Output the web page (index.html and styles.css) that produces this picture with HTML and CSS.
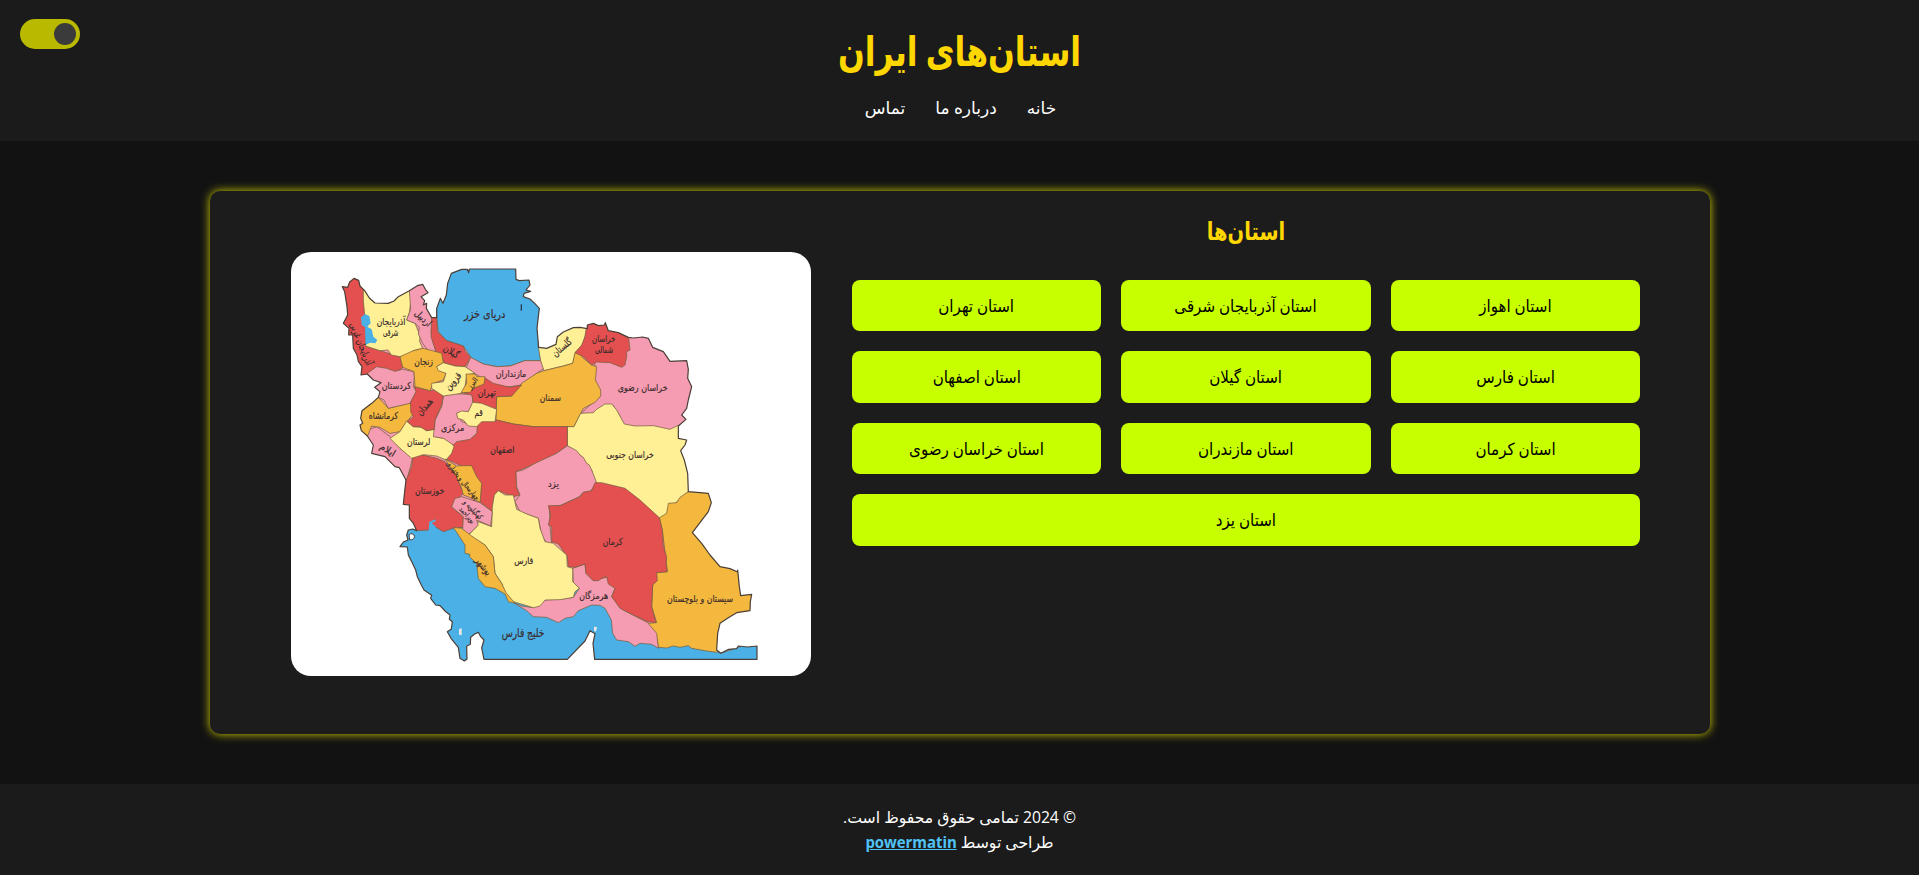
FILE: index.html
```html
<!DOCTYPE html>
<html lang="fa" dir="rtl">
<head>
<meta charset="UTF-8">
<title>استان‌های ایران</title>
<link rel="stylesheet" href="styles.css">
</head>
<body>
<header class="header">
  <button class="toggle" aria-label="تغییر پوسته"><span class="toggle-knob"></span></button>
  <h1 class="title">استان‌های ایران</h1>
  <nav class="nav">
    <a href="#">خانه</a>
    <a href="#">درباره ما</a>
    <a href="#">تماس</a>
  </nav>
</header>
<main class="card">
  <section class="provinces">
    <h2 class="subtitle">استان‌ها</h2>
    <div class="grid">
      <a class="item" href="#"><span>استان اهواز</span></a>
      <a class="item" href="#"><span>استان آذربایجان شرقی</span></a>
      <a class="item" href="#"><span>استان تهران</span></a>
      <a class="item" href="#"><span>استان فارس</span></a>
      <a class="item" href="#"><span>استان گیلان</span></a>
      <a class="item" href="#"><span>استان اصفهان</span></a>
      <a class="item" href="#"><span>استان کرمان</span></a>
      <a class="item" href="#"><span>استان مازندران</span></a>
      <a class="item" href="#"><span>استان خراسان رضوی</span></a>
      <a class="item wide" href="#"><span>استان یزد</span></a>
    </div>
  </section>
  <figure class="map">
    <svg class="map-svg" viewBox="33 36 1560 1272">
      <defs>
        <path id="border" d="M187 140L203 142 209 126 222 115 236 121 240 138 254 152 268 174 285 189 325 190 342 183 355 170 388 152 412 137 428 133 436 148 444 158 423 170 434 182 430 195 440 190 439 205 455 233 470 233 470 205 481 175 489 190 499 165 503 130 514 100 545 88 562 88 566 98 568 87 707 87 708 118 718 122 747 120 750 135 738 150 752 154 732 160 730 170 750 177 764 190 778 205 774 238 771 265 776 322 800 325 828 313 832 290 850 276 880 263 900 262 922 266 922 255 940 250 955 257 973 255 976 248 985 272 1015 278 1045 292 1060 294 1088 291 1105 295 1118 322 1150 335 1170 364 1220 362 1225 388 1223 415 1235 440 1225 480 1220 505 1205 525 1218 538 1195 558 1195 595 1220 600 1215 615 1202 632 1213 660 1223 700 1225 755 1285 760 1294 788 1285 815 1237 878 1265 910 1290 945 1320 980 1350 986 1373 996 1373 990 1378 1040 1382 1067 1415 1063 1411 1085 1410 1112 1370 1118 1345 1133 1320 1150 1313 1180 1310 1230 1322 1240 1346 1228 1370 1226 1375 1218 1403 1221 1431 1218 1431 1258 944 1258 939 1210 945 1181 930 1172 915 1203 862 1258 612 1258 605 1224 612 1200 602 1190 595 1177 584 1182 572 1192 571 1213 560 1219 561 1257 553 1263 540 1255 535 1222 513 1195 502 1175 514 1167 517 1145 508 1138 510 1125 495 1113 480 1097 467 1095 452 1075 455 1066 432 1050 424 1035 412 1010 407 990 396 967 385 945 382 921 360 920 370 906 384 900 380 885 385 870 398 867 410 872 400 850 388 835 388 795 370 793 375 745 378 720 358 683 345 680 315 650 275 640 280 615 262 588 244 572 240 555 248 550 242 535 246 512 275 490 295 472 300 455 284 442 303 428 280 420 262 402 243 405 246 380 235 364 231 345 220 325 218 285 206 285 207 265 190 250 203 225 201 200 194 155Z"/>
        <clipPath id="inside"><use href="#border"/></clipPath>
      </defs>
      <use href="#border" class="base"/>
      <g class="land" clip-path="url(#inside)">
        <path class="b" d="M370 850L350 920 500 1270 1440 1270 1440 1200 1322 1240 1308 1233 1100 1190 920 1050 600 900 550 850Z"/>
        <path class="b" d="M470 205L470 80 800 80 776 300 782 362 735 362 690 378 650 380 610 372 575 355 550 318 500 302 475 275 470 235Z"/>
        <path class="r" d="M180 100L230 100 275 170 250 185 256 220 257 318 300 332 360 350 370 382 345 398 290 384 262 402 230 410 180 250Z"/>
        <path class="y" d="M250 183L250 150 388 140 393 180 388 218 380 240 405 250 420 287 419 305 428 325 400 332 385 345 360 350 334 345 324 330 300 332 257 318 256 245Z"/>
        <path class="p" d="M388 152L388 120 450 120 462 235 453 275 459 305 468 335 447 335 428 310 415 282 418 262 405 250 380 240 392 208Z"/>
        <path class="r" d="M455 225L470 225 472 275 500 302 550 318 556 335 572 352 555 380 525 378 490 368 485 345 468 335 453 290Z"/>
        <path class="p" d="M572 352L610 372 650 380 690 378 735 362 782 362 792 385 770 400 725 435 690 440 640 440 600 410 558 385Z"/>
        <path class="y" d="M774 315L830 250 925 255 915 290 908 315 887 336 878 370 850 378 792 392 782 362Z"/>
        <path class="p" d="M1040 280L1250 280 1250 560 1190 560 1170 572 1120 562 1065 562 1033 558 1018 525 1000 497 965 500 935 522 900 523 930 495 960 470 940 430 945 365 990 360Z"/>
        <path class="o" d="M792 392L850 378 878 370 885 338 900 340 910 355 935 375 950 380 946 420 962 450 962 468 945 487 910 505 902 520 882 560 760 560 700 552 648 540 650 470 695 468 725 430 770 400Z"/>
        <path class="r" d="M922 240L1000 240 1045 285 1050 330 1040 335 1040 350 1035 375 1025 382 990 368 950 366 935 375 910 350 885 338 905 315 915 290Z"/>
        <path class="y" d="M902 520L940 518 950 508 975 492 995 492 1010 510 1033 552 1065 558 1120 557 1170 568 1195 556 1240 556 1240 755 1225 755 1200 778 1185 790 1168 794 1160 825 1138 836 1105 805 1045 755 945 730 935 690 900 645 862 617 862 560 882 560Z"/>
        <path class="o" d="M1225 755L1310 740 1310 930 1430 990 1430 1120 1310 1237 1280 1233 1235 1225 1225 1217 1200 1222 1180 1218 1160 1224 1135 1222 1130 1190 1103 1150 1130 1148 1115 1100 1118 1035 1130 998 1162 995 1155 935 1147 870 1138 833 1160 820 1165 790 1190 788 1200 772Z"/>
        <path class="p" d="M700 1088L725 1098 760 1103 785 1080 840 1078 880 1072 898 1045 880 1030 878 985 915 972 918 1000 940 1022 985 1010 1005 1045 995 1070 1030 1110 1103 1148 1130 1180 1135 1225 1115 1213 1080 1210 1065 1219 1045 1205 1010 1200 998 1180 994 1140 975 1105 960 1096 935 1095 895 1112 880 1130 855 1135 835 1148 800 1132 760 1130 740 1112Z"/>
        <path class="r" d="M520 605L585 588 592 550 610 543 650 540 700 552 760 560 862 560 862 617 830 640 780 665 708 695 710 745 720 765 700 770 655 752 642 770 637 815 600 785 605 730 580 700 550 680 498 657Z"/>
        <path class="p" d="M708 695L730 690 765 670 830 640 862 617 890 632 900 645 910 652 920 670 928 675 935 690 950 728 930 755 910 757 895 772 840 797 808 800 810 860 815 912 800 910 785 885 775 835 720 815 705 785 720 765 710 740Z"/>
        <path class="r" d="M945 728L965 728 1035 745 1080 780 1138 833 1147 870 1150 920 1160 950 1158 970 1162 995 1130 998 1132 1022 1118 1035 1115 1100 1128 1148 1103 1145 1060 1125 1020 1105 995 1070 1005 1045 985 1032 980 1010 965 1015 955 1022 940 1022 918 1000 915 972 885 982 865 980 862 950 835 912 815 905 815 860 805 855 812 825 805 797 840 797 900 770 910 757 935 752Z"/>
        <path class="y" d="M643 765L655 752 675 765 700 765 710 808 740 822 775 835 780 865 795 905 820 910 860 945 862 980 878 985 878 1025 898 1045 885 1055 880 1072 840 1079 795 1080 780 1098 760 1103 700 1085 675 1060 665 1030 645 1000 640 950 615 915 565 885 590 860 595 845 635 860 637 800Z"/>
        <path class="p" d="M250 575L290 560 330 590 360 625 398 652 390 685 378 730 250 700Z"/>
        <path class="r" d="M400 645L420 643 470 655 495 665 530 710 550 760 535 775 515 800 550 830 550 862 520 865 490 875 465 860 445 870 410 872 390 865 360 800 375 730 395 680Z"/>
        <path class="o" d="M262 590L230 575 230 510 295 472 325 505 390 488 402 520 380 545 360 575 330 580 300 562 275 558Z"/>
        <path class="y" d="M380 543L400 560 425 562 440 572 463 568 465 590 490 595 505 597 522 620 515 640 498 660 470 648 430 644 395 655 360 625 330 595 360 575Z"/>
        <path class="p" d="M262 400L290 380 320 385 345 394 368 388 402 395 403 412 400 440 410 455 390 490 325 505 312 480 295 472 270 460 260 415Z"/>
        <path class="p" d="M490 468L520 460 545 462 578 462 578 490 565 515 530 520 545 545 592 560 590 580 570 598 530 605 520 615 490 595 460 590 465 540 485 500Z"/>
        <path class="r" d="M403 440L450 452 472 450 490 468 485 495 465 540 463 568 440 572 420 560 400 560 382 545 400 530 392 515 392 495 390 490 408 455Z"/>
        <path class="o" d="M360 350L400 332 428 325 450 330 485 340 490 368 470 380 498 400 490 420 460 430 450 452 405 440 402 395 368 382Z"/>
        <path class="y" d="M470 380L490 368 525 378 555 380 585 400 560 405 555 440 545 460 490 468 455 445 455 430 490 425 498 400 475 392Z"/>
        <path class="r" d="M612 412L640 430 690 442 725 435 695 468 650 470 648 508 580 487 575 465 550 460 580 445Z"/>
        <path class="o" d="M558 402L585 402 590 410 615 410 612 432 580 445 570 457 543 458 560 430Z"/>
        <path class="y" d="M578 487L605 490 650 508 645 545 605 545 590 560 565 558 550 540 533 535 530 520 545 513 565 515Z"/>
        <path class="o" d="M495 657L530 678 550 677 575 677 590 710 605 730 600 787 570 772 550 765 545 745 530 710Z"/>
        <path class="p" d="M515 800L525 775 545 770 600 788 637 815 632 858 590 840 595 855 565 885 548 870 550 830Z"/>
        <path class="o" d="M520 862L545 865 575 888 615 915 640 950 645 1000 665 1030 678 1058 705 1090 685 1085 675 1062 645 1045 615 1040 595 1015 590 970 568 950 570 943 555 940 555 915Z"/>
      </g>
      <use href="#border" class="outline"/>
      <path class="lake" d="M243 232L255 222 268 228 272 250 262 260 275 268 280 290 292 300 286 310 270 308 257 315 255 262 245 255Z"/>
      <path class="lake" d="M446 872L448 845 466 838 467 844 455 849 468 860 463 872Z"/>
      <path class="island" d="M387 884Q398 876 404 889Q401 902 389 899Z"/>
      <path class="isle" d="M537 1168L545 1164 545 1186 537 1184Z M942 1160L951 1161 948 1175 942 1172Z"/>
      <path class="mark" d="M724 193V212"/>
      <g class="labels">
        <text x="614" y="234" textLength="124" lengthAdjust="spacingAndGlyphs" class="sea">دریای خزر</text>
        <text x="729" y="1192" textLength="128" lengthAdjust="spacingAndGlyphs" class="sea">خلیج فارس</text>
        <text x="333" y="256" textLength="86" lengthAdjust="spacingAndGlyphs">آذربایجان</text>
        <text x="332" y="289" textLength="46" lengthAdjust="spacingAndGlyphs">شرقی</text>
        <text transform="translate(234 315) rotate(68)" textLength="136" lengthAdjust="spacingAndGlyphs">آذربایجان غربی</text>
        <text transform="translate(423 242) rotate(43)" textLength="58" lengthAdjust="spacingAndGlyphs">اردبیل</text>
        <text transform="translate(509 343) rotate(32)" textLength="50" lengthAdjust="spacingAndGlyphs">گیلان</text>
        <text x="693" y="411" textLength="92" lengthAdjust="spacingAndGlyphs">مازنداران</text>
        <text transform="translate(852 330) rotate(-41)" textLength="68" lengthAdjust="spacingAndGlyphs">گلستان</text>
        <text x="971" y="305" textLength="70" lengthAdjust="spacingAndGlyphs">خراسان</text>
        <text x="972" y="340" textLength="54" lengthAdjust="spacingAndGlyphs">شمالی</text>
        <text x="1088" y="452" textLength="150" lengthAdjust="spacingAndGlyphs">خراسان رضوی</text>
        <text x="811" y="483" textLength="64" lengthAdjust="spacingAndGlyphs">سمنان</text>
        <text x="1050" y="654" textLength="143" lengthAdjust="spacingAndGlyphs">خراسان جنوبی</text>
        <text x="431" y="374" textLength="56" lengthAdjust="spacingAndGlyphs">زنجان</text>
        <text transform="translate(526 430) rotate(-48)" textLength="60" lengthAdjust="spacingAndGlyphs">قزوین</text>
        <text transform="translate(583 434) rotate(-52)" textLength="36" lengthAdjust="spacingAndGlyphs" class="small">البرز</text>
        <text x="620" y="468" textLength="54" lengthAdjust="spacingAndGlyphs">تهران</text>
        <text x="349" y="446" textLength="88" lengthAdjust="spacingAndGlyphs">کردستان</text>
        <text transform="translate(441 507) rotate(-49)" textLength="58" lengthAdjust="spacingAndGlyphs">همدان</text>
        <text x="596" y="529" textLength="25" lengthAdjust="spacingAndGlyphs">قم</text>
        <text x="518" y="574" textLength="70" lengthAdjust="spacingAndGlyphs">مرکزی</text>
        <text x="310" y="538" textLength="88" lengthAdjust="spacingAndGlyphs">کرمانشاه</text>
        <text x="416" y="615" textLength="70" lengthAdjust="spacingAndGlyphs">لرستان</text>
        <text transform="translate(318 638) rotate(32)" textLength="50" lengthAdjust="spacingAndGlyphs">ایلام</text>
        <text x="667" y="638" textLength="72" lengthAdjust="spacingAndGlyphs">اصفهان</text>
        <text x="820" y="741" textLength="34" lengthAdjust="spacingAndGlyphs">یزد</text>
        <text x="449" y="762" textLength="88" lengthAdjust="spacingAndGlyphs">خوزستان</text>
        <text transform="translate(543 727) rotate(51)" textLength="142" lengthAdjust="spacingAndGlyphs" class="small">چهارمحال و بختیاری</text>
        <text transform="translate(574 814) rotate(46)" textLength="72" lengthAdjust="spacingAndGlyphs" class="small">کهگیلویه و</text>
        <text transform="translate(556 830) rotate(48)" textLength="58" lengthAdjust="spacingAndGlyphs" class="small">بویراحمد</text>
        <text x="731" y="972" textLength="57" lengthAdjust="spacingAndGlyphs">فارس</text>
        <text x="998" y="915" textLength="60" lengthAdjust="spacingAndGlyphs">کرمان</text>
        <text transform="translate(603 985) rotate(52)" textLength="60" lengthAdjust="spacingAndGlyphs">بوشهر</text>
        <text x="941" y="1076" textLength="87" lengthAdjust="spacingAndGlyphs">هرمزگان</text>
        <text x="1260" y="1086" textLength="198" lengthAdjust="spacingAndGlyphs">سیستان و بلوچستان</text>
      </g>
    </svg>
  </figure>
</main>
<footer class="footer">
  <p>© 2024 تمامی حقوق محفوظ است.</p>
  <p>طراحی توسط <a class="author" href="#">powermatin</a></p>
</footer>
</body>
</html>
```
FILE: styles.css
```css
* { box-sizing: border-box; margin: 0; padding: 0; }
body {
  min-height: 875px;
  background: #121212;
  color: #fff;
  font-family: "Open Sans", "DejaVu Sans", sans-serif;
  font-size: 16px;
  overflow: hidden;
}
a { color: inherit; text-decoration: none; }
.header {
  position: relative;
  height: 141px;
  padding-top: 17px;
  background: #1b1b1b;
  text-align: center;
}
.toggle {
  position: absolute;
  top: 19px;
  left: 20px;
  width: 60px;
  height: 30px;
  padding: 4px;
  display: flex;
  border: 0;
  border-radius: 15px;
  background: #b9b900;
}
.toggle-knob { width: 22px; height: 22px; border-radius: 50%; background: #3b3b3b; }
.title { height: 70px; line-height: 67px; font-size: 40px; color: #ffd700; transform: scale(.785, 1.03); }
.nav { display: flex; justify-content: center; gap: 30px; height: 44px; padding-left: 2px; line-height: 42px; font-size: 17px; }
.card {
  display: flex;
  justify-content: space-between;
  width: 1500px;
  height: 543px;
  margin: 50px auto;
  padding: 20px 69.6px 0 81px;
  border-radius: 10px;
  background: #1c1c1c;
  box-shadow: 0 0 10px #ffff00d0;
}
.provinces { width: 788px; }
.subtitle { height: 40px; line-height: 40px; font-size: 24px; color: #ffd700; text-align: center; transform: scale(.81, 1.04); }
.grid { display: grid; grid-template-columns: repeat(3, 1fr); gap: 20px; margin-top: 29px; }
.item {
  height: 51.4px;
  line-height: 52px;
  border-radius: 8px;
  background: #c8ff00;
  color: #000;
  text-align: center;
}
.item span { display: inline-block; transform: scale(.943, 1.05); }
.wide { grid-column: 1 / -1; }
.map { width: 520px; height: 424px; margin-top: 41px; border-radius: 20px; background: #fff; overflow: hidden; }
.map-svg { display: block; width: 100%; height: 100%; }
.base { fill: #f59cb2; }
.land path { stroke: #75603f; stroke-width: 2.2; stroke-linejoin: round; }
.outline { fill: none; stroke: #4b4037; stroke-width: 3.6; stroke-linejoin: round; }
.land .b, .lake { fill: #4bb0e6; }
.land .r { fill: #e4504f; }
.land .y { fill: #fff096; }
.land .p { fill: #f59cb2; }
.land .o { fill: #f4b83e; }
.island { fill: #fff; stroke: #4b4037; stroke-width: 3; }
.isle { fill: #e8e8e8; }
.mark { stroke: #2b3c55; stroke-width: 4; }
.labels { font-family: "DejaVu Sans", sans-serif; font-size: 29px; fill: #3a2b2b; stroke: #3a2b2b; stroke-width: .6; }
.labels text { text-anchor: middle; }
.labels .sea { font-size: 36px; }
.labels .small { font-size: 22px; }
.footer { height: 91px; padding-top: 21px; background: #1b1b1b; text-align: center; line-height: 25px; }
.footer p { transform: scaleX(.98); }
.author { color: #4fc3f7; font-size: 15.2px; font-weight: 700; text-decoration: underline; }
```
